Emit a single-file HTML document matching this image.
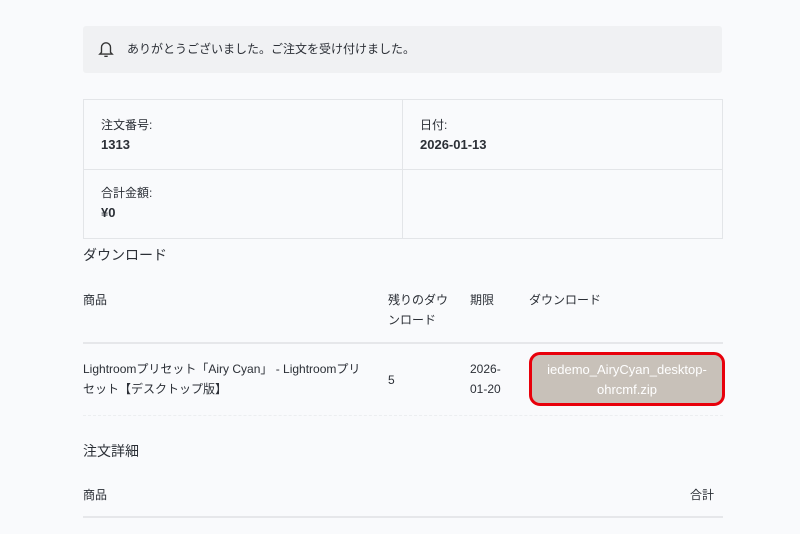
<!DOCTYPE html>
<html><head><meta charset="utf-8"><style>
*{margin:0;padding:0;box-sizing:border-box}
body{width:800px;height:534px;background:#f9fafc;font-family:"Liberation Sans","Noto Sans CJK JP",sans-serif;color:#2b2f36;position:relative;overflow:hidden;font-size:12px}
.a{position:absolute;white-space:nowrap;line-height:20px}
.b{font-weight:bold;font-size:13px}
.h{font-size:14px}
</style></head><body>
<div style="position:absolute;left:83px;top:26px;width:639px;height:47px;background:#f0f1f3;border-radius:3px"></div>
<svg style="position:absolute;left:98px;top:40px" width="16" height="18" viewBox="0 0 14 16" fill="none" stroke="#333" stroke-width="1.2"><path d="M3 11V6.5a4 4 0 0 1 8 0V11l1.5 1.5h-11z"/><path d="M5.5 14.5h3"/></svg>
<div class="a" style="left:127px;top:39px">ありがとうございました。ご注文を受け付けました。</div>
<div style="position:absolute;left:83px;top:99px;width:640px;height:140px;border:1px solid #e3e5e8"></div>
<div style="position:absolute;left:402px;top:99px;width:1px;height:140px;background:#e3e5e8"></div>
<div style="position:absolute;left:83px;top:169px;width:640px;height:1px;background:#e3e5e8"></div>
<div class="a" style="left:101px;top:115px">注文番号:</div>
<div class="a b" style="left:101px;top:135px">1313</div>
<div class="a" style="left:420px;top:115px">日付:</div>
<div class="a b" style="left:420px;top:135px">2026-01-13</div>
<div class="a" style="left:101px;top:183px">合計金額:</div>
<div class="a b" style="left:101px;top:203px">¥0</div>
<div class="a h" style="left:83px;top:245px">ダウンロード</div>
<div class="a" style="left:83px;top:290px">商品</div>
<div class="a" style="left:388px;top:290px">残りのダウ</div>
<div class="a" style="left:388px;top:310px">ンロード</div>
<div class="a" style="left:470px;top:290px">期限</div>
<div class="a" style="left:529px;top:290px">ダウンロード</div>
<div style="position:absolute;left:83px;top:342px;width:640px;height:2px;background:#e6e7ea"></div>
<div class="a" style="left:83px;top:359px">Lightroomプリセット「Airy Cyan」 - Lightroomプリ</div>
<div class="a" style="left:83px;top:379px">セット【デスクトップ版】</div>
<div class="a" style="left:388px;top:370px">5</div>
<div class="a" style="left:470px;top:359px">2026-</div>
<div class="a" style="left:470px;top:379px">01-20</div>
<div style="position:absolute;left:529px;top:352px;width:196px;height:54px;border:3px solid #e8000b;border-radius:11px;background:#c8c1b9;color:#fff;text-align:center;line-height:20px;padding-top:5px;font-size:13px">iedemo_AiryCyan_desktop-<br>ohrcmf.zip</div>
<div style="position:absolute;left:83px;top:415px;width:640px;border-top:1px dashed #eceef0"></div>
<div class="a h" style="left:83px;top:441px">注文詳細</div>
<div class="a" style="left:83px;top:485px">商品</div>
<div class="a" style="left:690px;top:485px">合計</div>
<div style="position:absolute;left:83px;top:516px;width:640px;height:2px;background:#e6e7ea"></div>
</body></html>
